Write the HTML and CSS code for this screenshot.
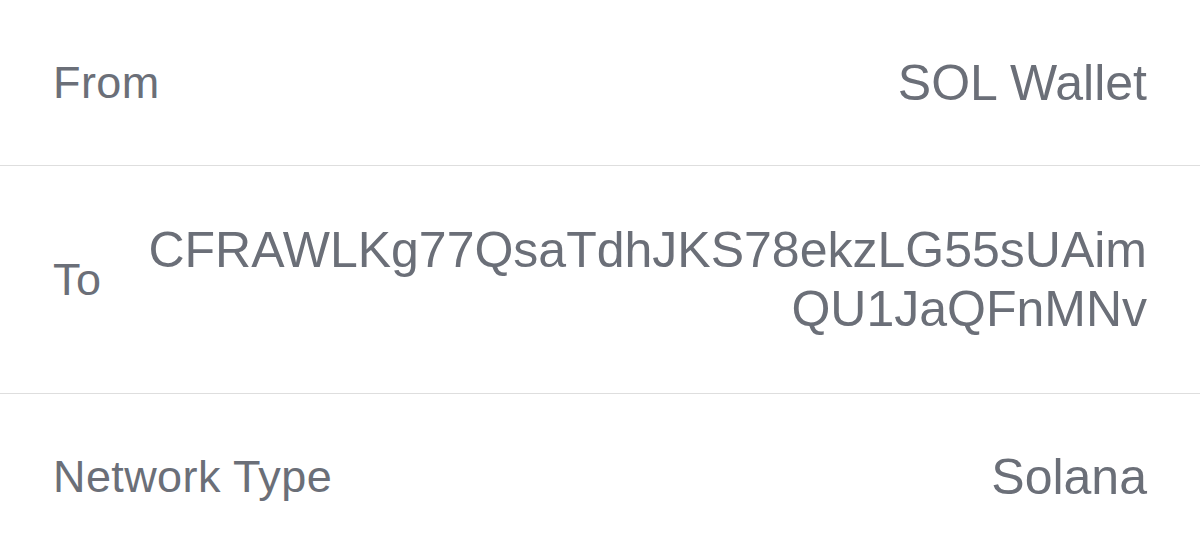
FILE: index.html
```html
<!DOCTYPE html>
<html lang="en">
<head>
    <meta charset="UTF-8">
    <meta name="viewport" content="width=device-width, initial-scale=1.0">
    <title>Transfer Details</title>
    <link rel="stylesheet" href="styles.css">
</head>
<body>
<div class="details">
    <div class="detail-row">
        <span class="detail-label">From</span>
        <span class="detail-value">SOL Wallet</span>
    </div>
    <div class="detail-row">
        <span class="detail-label">To</span>
        <span class="detail-value address">CFRAWLKg77QsaTdhJKS78ekzLG55sUAimQU1JaQFnMNv</span>
    </div>
    <div class="detail-row">
        <span class="detail-label">Network Type</span>
        <span class="detail-value">Solana</span>
    </div>
</div>
</body>
</html>
```

FILE: styles.css
```css
body {
    margin: 0;
    padding: 0;
    background: #ffffff;
    font-family: "Liberation Sans", Arial, sans-serif;
    color: #6b6f78;
}

.details {
    width: 100%;
}

.detail-row {
    display: flex;
    align-items: center;
    justify-content: space-between;
    gap: 32px;
    padding: 55px 53px 54px;
    border-bottom: 1px solid #dedede;
}

.detail-label {
    flex-shrink: 0;
    font-size: 45px;
    line-height: 56px;
    letter-spacing: 0.4px;
}

.detail-value {
    flex: 1;
    text-align: right;
    font-size: 50px;
    line-height: 56px;
}

.detail-value.address {
    word-break: break-all;
    line-height: 59px;
}
```
